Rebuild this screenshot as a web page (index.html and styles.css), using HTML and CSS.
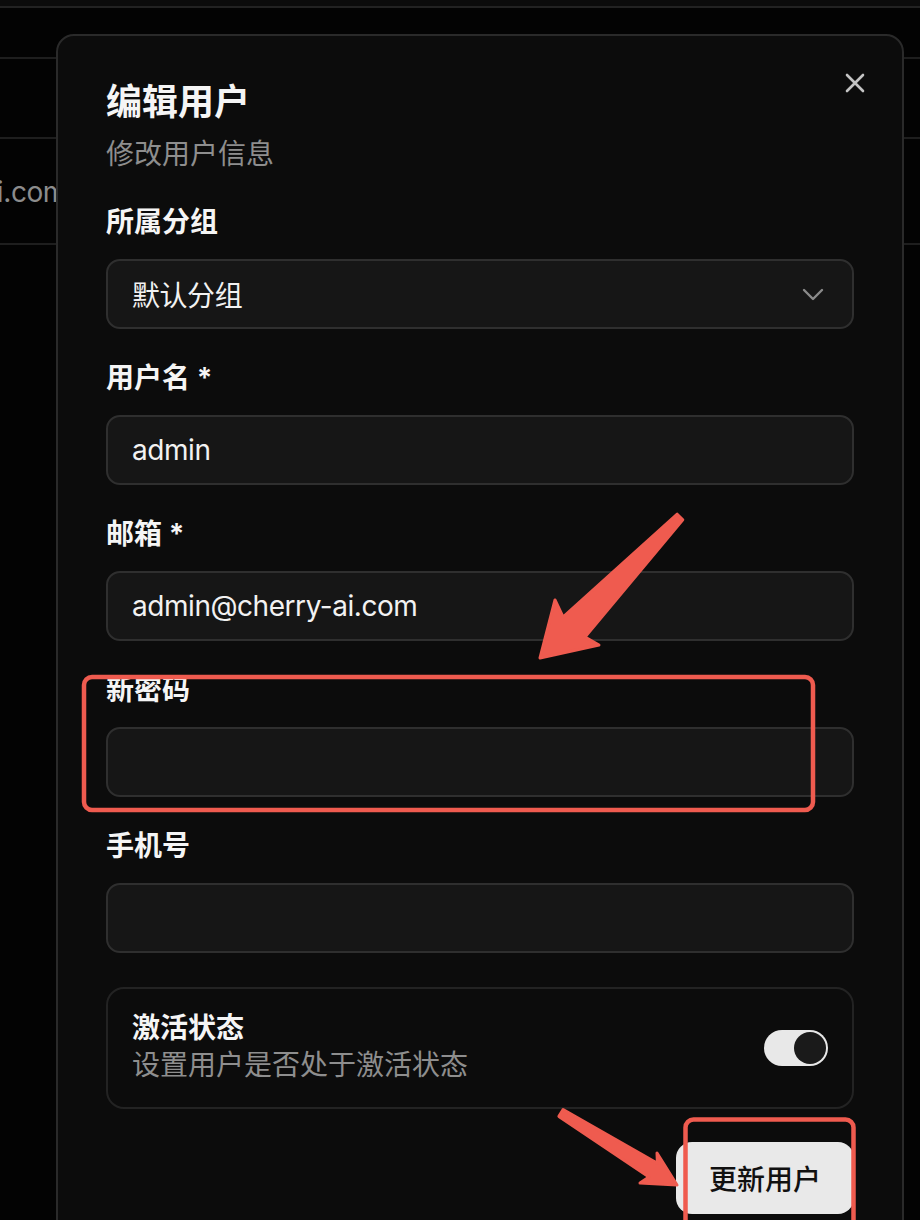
FILE: index.html
```html
<!DOCTYPE html>
<html lang="zh-CN">
<head>
<meta charset="utf-8">
<title>编辑用户</title>
<link rel="stylesheet" href="styles.css">
</head>
<body>
<div class="page">
  <div class="topbar"></div>
  <div class="row row-a"></div>
  <div class="row row-b"></div>
  <div class="row row-c">
    <div class="cell-email"><span>admin@cherry-ai.com</span></div>
  </div>

  <div class="modal">
    <button class="close" aria-label="关闭">
      <svg width="20" height="20" viewBox="0 0 20 20"><path d="M2 2 L18 18 M18 2 L2 18" stroke="#c4c4c4" stroke-width="2.6" stroke-linecap="round" fill="none"/></svg>
    </button>
    <h1 class="title">编辑用户</h1>
    <p class="subtitle">修改用户信息</p>

    <div class="form">
      <div class="field">
        <label class="label">所属分组</label>
        <div class="input select">
          <span>默认分组</span>
          <svg class="chev" width="22" height="14" viewBox="0 0 22 14"><path d="M2 2 L11 11 L20 2" stroke="#8a8a8a" stroke-width="2.4" fill="none" stroke-linecap="round" stroke-linejoin="round"/></svg>
        </div>
      </div>
      <div class="field">
        <label class="label">用户名 *</label>
        <div class="input">admin</div>
      </div>
      <div class="field">
        <label class="label">邮箱 *</label>
        <div class="input">admin@cherry-ai.com</div>
      </div>
      <div class="field">
        <label class="label">新密码</label>
        <div class="input"></div>
      </div>
      <div class="field">
        <label class="label">手机号</label>
        <div class="input"></div>
      </div>

      <div class="switch-card">
        <div class="switch-text">
          <div class="switch-title">激活状态</div>
          <div class="switch-desc">设置用户是否处于激活状态</div>
        </div>
        <div class="switch"><div class="thumb"></div></div>
      </div>

      <div class="actions">
        <button class="primary">更新用户</button>
      </div>
    </div>
  </div>

  <svg class="annot" width="920" height="1220" viewBox="0 0 920 1220">
    <rect x="84" y="677" width="729" height="133" rx="8" fill="none" stroke="#ef5b4f" stroke-width="4.5"/>
    <rect x="685.5" y="1119.5" width="168" height="130" rx="8" fill="none" stroke="#ef5b4f" stroke-width="4.5"/>
    <polygon points="682.8,519.8 585,637 599,645 540,658 555,600 563,617 677.2,514.2" fill="#ef5b4f" stroke="#ef5b4f" stroke-width="3" stroke-linejoin="round"/>
    <polygon points="563.1,1109.6 657.4,1163.4 657,1153 677,1185 640,1183 649,1177 558.9,1116.4" fill="#ef5b4f" stroke="#ef5b4f" stroke-width="3" stroke-linejoin="round"/>
  </svg>
</div>
</body>
</html>
```

FILE: styles.css
```css
* { box-sizing: border-box; }

html, body {
  margin: 0;
  padding: 0;
  background: #030303;
  overflow: hidden;
}

body {
  font-family: Inter, "Noto Sans CJK SC", "Noto Sans", sans-serif;
  color: #f2f2f2;
}

.page {
  position: relative;
  width: 920px;
  height: 1220px;
  overflow: hidden;
}

.topbar {
  height: 8px;
  background: #0b0b0b;
  border-bottom: 2px solid #222;
}

.row {
  border-bottom: 2px solid #1e1e1e;
}
.row-a { height: 51px; }
.row-b { height: 80px; }
.row-c {
  height: 106px;
  display: flex;
  align-items: center;
}

.cell-email {
  width: 67px;
  display: flex;
  justify-content: flex-end;
  white-space: nowrap;
  font-size: 28px;
  letter-spacing: -0.4px;
  color: #8c8c8c;
  padding-top: 2px;
}

.modal {
  position: absolute;
  left: 56px;
  top: 34px;
  width: 848px;
  height: 1260px;
  background: #0c0c0c;
  border: 2px solid #2a2a2a;
  border-radius: 18px;
  padding: 46px 48px 0 48px;
}

.close {
  position: absolute;
  right: 35px;
  top: 35px;
  width: 24px;
  height: 24px;
  padding: 0;
  border: none;
  background: transparent;
  display: flex;
  align-items: center;
  justify-content: center;
}

.title {
  margin: 0;
  font-size: 36px;
  line-height: 40px;
  font-weight: 700;
  color: #f5f5f5;
}

.subtitle {
  margin: 12px 0 0 0;
  font-size: 28px;
  line-height: 40px;
  color: #8e8e8e;
  font-weight: 400;
}

.form {
  margin-top: 34px;
  display: flex;
  flex-direction: column;
}

.field {
  display: flex;
  flex-direction: column;
  gap: 23px;
  margin-bottom: 35px;
}

.label {
  font-size: 28px;
  line-height: 28px;
  font-weight: 700;
  color: #f5f5f5;
}

.input {
  height: 70px;
  background: #161616;
  border: 2px solid #2f2f2f;
  border-radius: 14px;
  padding: 0 24px;
  display: flex;
  align-items: center;
  font-size: 28px;
  letter-spacing: -0.45px;
  color: #f2f2f2;
}

.select {
  justify-content: space-between;
}
.chev {
  margin-right: 4px;
  margin-top: 2px;
}

.switch-card {
  margin-top: -1px;
  height: 122px;
  border: 2px solid #232323;
  border-radius: 18px;
  background: #0c0c0c;
  padding: 0 24px;
  display: flex;
  align-items: center;
  justify-content: space-between;
}

.switch-text {
  display: flex;
  flex-direction: column;
  margin-bottom: 5px;
}
.switch-title {
  font-size: 28px;
  line-height: 38px;
  font-weight: 700;
  color: #f5f5f5;
}
.switch-desc {
  font-size: 28px;
  line-height: 36px;
  color: #8e8e8e;
}

.switch {
  width: 64px;
  height: 36px;
  border-radius: 18px;
  background: #e8e8e8;
  padding: 2px;
  display: flex;
  justify-content: flex-end;
}
.thumb {
  width: 32px;
  height: 32px;
  border-radius: 50%;
  background: #1a1a1a;
}

.actions {
  margin-top: 33px;
  display: flex;
  justify-content: flex-end;
}

.primary {
  height: 72px;
  padding: 0 33px;
  border: none;
  border-radius: 16px;
  background: #e9e9e9;
  color: #111;
  font-family: Inter, "Noto Sans CJK SC", sans-serif;
  font-size: 28px;
  font-weight: 500;
}

.annot {
  position: absolute;
  left: 0;
  top: 0;
  pointer-events: none;
}
```
